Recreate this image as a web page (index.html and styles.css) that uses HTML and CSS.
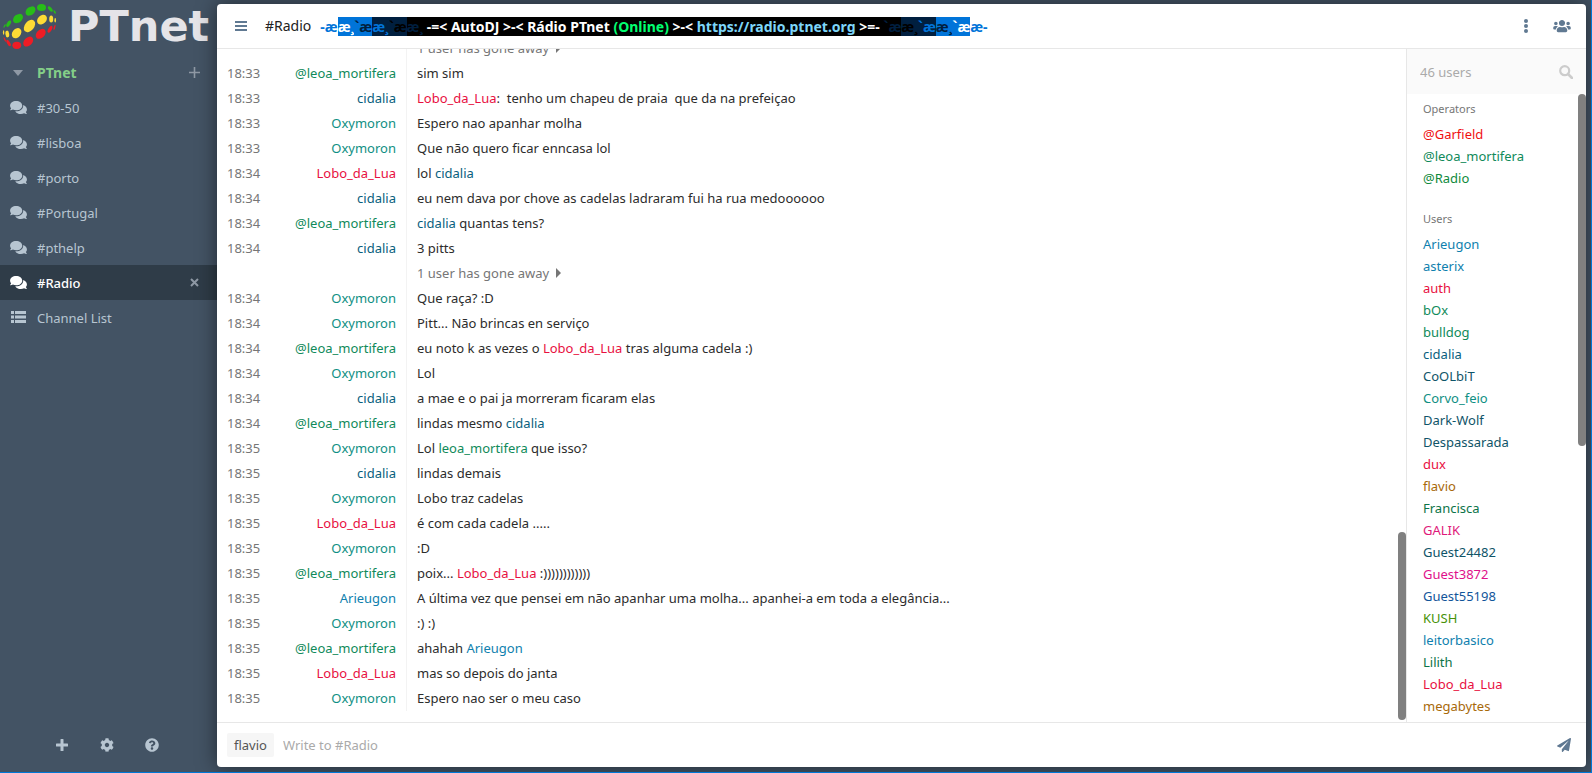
FILE: index.html
```
<!DOCTYPE html>
<html lang="pt">
<head>
    <meta charset="UTF-8">
    <meta name="viewport" content="width=device-width, initial-scale=1.0">
    <title>#Radio - PTnet</title>
    <link rel="stylesheet" href="styles.css">
</head>
<body>
    <svg class="sprite" aria-hidden="true">
        <symbol id="comments" viewBox="0 0 576 512"><path d="M416 192c0-88.4-93.1-160-208-160S0 103.6 0 192c0 34.3 14.1 65.9 38 92-13.4 30.2-35.5 54.2-35.8 54.5-2.2 2.3-2.8 5.7-1.5 8.7S4.8 352 8 352c36.6 0 66.9-12.3 88.7-25 32.2 15.7 70.3 25 111.3 25 114.9 0 208-71.6 208-160zm122 220c23.9-26 38-57.7 38-92 0-66.9-53.5-124.2-129.3-148.1.9 6.6 1.3 13.3 1.3 20.1 0 105.9-107.7 192-240 192-10.8 0-21.3-.8-31.7-1.9C207.8 439.6 281.8 480 368 480c41 0 79.1-9.2 111.3-25 21.8 12.7 52.1 25 88.7 25 3.2 0 6.1-1.9 7.3-4.8 1.3-2.9.7-6.3-1.5-8.7-.3-.3-22.4-24.2-35.8-54.5z"/></symbol>
    </svg>

    <div class="app">
        <nav class="sidebar">
            <div class="logo">
                <svg class="logo-mark" viewBox="0 0 60 52" width="60" height="52">
                    <g fill="#27bd18">
                        <ellipse cx="41.5" cy="7.5" rx="4.5" ry="3.5"/>
                        <ellipse cx="30.5" cy="11" rx="5.5" ry="4" transform="rotate(-38 30.5 11)"/>
                        <ellipse cx="18" cy="18.5" rx="5.5" ry="4" transform="rotate(-38 18 18.5)"/>
                        <ellipse cx="8.7" cy="23.7" rx="3.6" ry="1.8" transform="rotate(-60 8.7 23.7)"/>
                        <ellipse cx="4.6" cy="26" rx="2" ry=".7" transform="rotate(-60 4.6 26)"/>
                        <ellipse cx="50.3" cy="9" rx="3.2" ry="1.6" transform="rotate(50 50.3 9)"/>
                        <ellipse cx="54.7" cy="12" rx="2" ry=".8" transform="rotate(60 54.7 12)"/>
                    </g>
                    <g fill="#fddb35">
                        <ellipse cx="42" cy="19.6" rx="5.6" ry="4.2" transform="rotate(-45 42 19.6)"/>
                        <ellipse cx="29.5" cy="26" rx="7" ry="4.6" transform="rotate(-50 29.5 26)"/>
                        <ellipse cx="16.6" cy="33.2" rx="5.6" ry="4.2" transform="rotate(-50 16.6 33.2)"/>
                        <ellipse cx="7.3" cy="34" rx="1.9" ry="3.4" transform="rotate(-8 7.3 34)"/>
                        <ellipse cx="3.6" cy="32.5" rx=".7" ry="2.2"/>
                        <ellipse cx="51.2" cy="19" rx="2" ry="3.6"/>
                        <ellipse cx="55.2" cy="20.3" rx=".8" ry="2.3"/>
                    </g>
                    <g fill="#ee1c25">
                        <ellipse cx="40.7" cy="33.8" rx="5.8" ry="4" transform="rotate(-45 40.7 33.8)"/>
                        <ellipse cx="28.2" cy="41.6" rx="5.8" ry="4" transform="rotate(-45 28.2 41.6)"/>
                        <ellipse cx="16.8" cy="45.3" rx="4.4" ry="3.6"/>
                        <ellipse cx="8.6" cy="43" rx="3.6" ry="1.5" transform="rotate(60 8.6 43)"/>
                        <ellipse cx="4.8" cy="39.5" rx="2.4" ry=".7" transform="rotate(65 4.8 39.5)"/>
                        <ellipse cx="50" cy="29.3" rx="3.8" ry="1.7" transform="rotate(-60 50 29.3)"/>
                        <ellipse cx="54.5" cy="27.4" rx="2.8" ry=".8" transform="rotate(-75 54.5 27.4)"/>
                    </g>
                </svg>
                <span class="logo-text">PTnet</span>
            </div>
            <div class="item network">
                <button class="icon-btn" aria-label="Collapse"><svg width="10" height="6" viewBox="0 0 10 6"><path d="M0 0h10L5 6z"/></svg></button>
                <a href="#ptnet">PTnet</a>
                <button class="icon-btn side" aria-label="Join channel"><svg width="11" height="11" viewBox="0 0 11 11"><path d="M5.500 0v11M0 5.500h11" stroke="currentColor" stroke-width="1.600"/></svg></button>
            </div>
            <div class="item"><svg class="chan-icon"><use href="#comments"/></svg><a href="#30-50">#30-50</a></div>
            <div class="item"><svg class="chan-icon"><use href="#comments"/></svg><a href="#lisboa">#lisboa</a></div>
            <div class="item"><svg class="chan-icon"><use href="#comments"/></svg><a href="#porto">#porto</a></div>
            <div class="item"><svg class="chan-icon"><use href="#comments"/></svg><a href="#portugal">#Portugal</a></div>
            <div class="item"><svg class="chan-icon"><use href="#comments"/></svg><a href="#pthelp">#pthelp</a></div>
            <div class="item active">
                <svg class="chan-icon"><use href="#comments"/></svg><a href="#radio">#Radio</a>
                <button class="icon-btn side" aria-label="Leave"><svg width="9" height="9" viewBox="0 0 9 9"><path d="M1 1l7 7M8 1L1 8" stroke="currentColor" stroke-width="2"/></svg></button>
            </div>
            <div class="item">
                <svg class="chan-icon" viewBox="0 0 17 15"><path d="M1 1h3v3H1zM5 1h11v3H5zM1 5.500h3v3H1zM5 5.500h11v3H5zM1 10h3v3H1zM5 10h11v3H5z"/></svg><a href="#list">Channel List</a>
            </div>
            <footer class="sidebar-footer">
                <button aria-label="Connect"><svg width="14" height="14" viewBox="0 0 14 14"><path d="M6 1h2q.5 0 .5.5v4h4q.5 0 .5.5v2q0 .5-.5.5h-4v4q0 .5-.5.5H6q-.5 0-.5-.5v-4h-4Q1 8.500 1 8V6q0-.5.5-.5h4v-4Q5.500 1 6 1z"/></svg></button>
                <button aria-label="Settings"><svg width="14" height="14" viewBox="0 0 512 512"><path d="M487.4 315.7l-42.6-24.6c4.3-23.2 4.3-47 0-70.2l42.6-24.6c4.9-2.8 7.1-8.6 5.5-14-11.1-35.6-30-67.8-54.7-94.6-3.8-4.1-10-5.1-14.8-2.3L380.8 110c-17.9-15.4-38.5-27.3-60.8-35.1V25.8c0-5.6-3.900-10.500-9.400-11.700-36.700-8.200-74.300-7.800-109.200 0-5.500 1.200-9.400 6.100-9.400 11.700V75c-22.200 7.900-42.800 19.800-60.800 35.100L88.700 85.500c-4.900-2.800-11-1.900-14.800 2.300-24.700 26.700-43.600 58.900-54.700 94.600-1.700 5.400.6 11.200 5.500 14L67.300 221c-4.300 23.200-4.300 47 0 70.200l-42.600 24.600c-4.900 2.800-7.100 8.600-5.500 14 11.100 35.600 30 67.800 54.700 94.600 3.800 4.100 10 5.100 14.800 2.300l42.600-24.600c17.900 15.400 38.500 27.300 60.800 35.100v49.200c0 5.600 3.900 10.500 9.400 11.700 36.700 8.200 74.300 7.800 109.200 0 5.500-1.200 9.400-6.100 9.400-11.700v-49.200c22.200-7.900 42.800-19.800 60.800-35.100l42.600 24.600c4.900 2.800 11 1.900 14.800-2.300 24.700-26.700 43.600-58.900 54.700-94.600 1.500-5.500-.7-11.300-5.600-14.100zM256 336c-44.100 0-80-35.900-80-80s35.900-80 80-80 80 35.900 80 80-35.900 80-80 80z"/></svg></button>
                <button aria-label="Help"><svg width="14" height="14" viewBox="0 0 512 512"><path d="M504 256c0 136.997-111.043 248-248 248S8 392.997 8 256C8 119.083 119.043 8 256 8s248 111.083 248 248zM262.655 90c-54.497 0-89.255 22.957-116.549 63.758-3.536 5.286-2.353 12.415 2.715 16.258l34.699 26.310c5.205 3.947 12.621 3.008 16.665-2.122 17.864-22.658 30.113-35.797 57.303-35.797 20.429 0 45.698 13.148 45.698 32.958 0 14.976-12.363 22.667-32.534 33.976C247.128 238.528 216 254.941 216 296v4c0 6.627 5.373 12 12 12h56c6.627 0 12-5.373 12-12v-1.333c0-28.462 83.186-29.647 83.186-106.667 0-58.002-60.165-102-116.531-102zM256 338c-25.365 0-46 20.635-46 46 0 25.364 20.635 46 46 46s46-20.636 46-46c0-25.365-20.635-46-46-46z"/></svg></button>
            </footer>
        </nav>

        <main class="window">
            <header class="header">
                <button class="menu-btn" aria-label="Toggle channel list"><svg width="12" height="12" viewBox="0 0 12 12"><path d="M0 1h12v2H0zM0 5h12v2H0zM0 9h12v2H0z"/></svg></button>
                <h1>#Radio</h1>
                <div class="topic"><span class="fg-blue">-æ</span><span class="bg-blue fg-white">æ¸</span><span class="bg-blue fg-navy">`æ</span><span class="bg-navy fg-blue">æ¸</span><span class="bg-navy fg-black">`æ</span><span class="bg-black fg-navy">æ¸</span><span class="bg-black fg-white"> -=&lt; AutoDJ &gt;-&lt; Rádio PTnet <span class="fg-green">(Online)</span> &gt;-&lt; <a href="https://radio.ptnet.org">https://radio.ptnet.org</a> &gt;=- </span><span class="bg-black fg-navy">`æ</span><span class="bg-navy fg-black">æ¸</span><span class="bg-navy fg-blue">`æ</span><span class="bg-blue fg-navy">æ¸</span><span class="bg-blue fg-white">`æ</span><span class="fg-blue">æ-</span></div>
                <button class="more-btn" aria-label="Menu"><svg width="6" height="14" viewBox="0 0 6 14"><circle cx="3" cy="2" r="2"/><circle cx="3" cy="7" r="2"/><circle cx="3" cy="12" r="2"/></svg></button>
                <button class="users-btn" aria-label="Toggle user list"><svg width="18" height="14" viewBox="0 0 640 512"><path d="M96 224c35.300 0 64-28.700 64-64s-28.700-64-64-64-64 28.700-64 64 28.700 64 64 64zm448 0c35.300 0 64-28.700 64-64s-28.700-64-64-64-64 28.700-64 64 28.700 64 64 64zm32 32h-64c-17.600 0-33.500 7.100-45.100 18.600 40.300 22.100 68.900 62 75.100 109.400h66c17.700 0 32-14.300 32-32v-32c0-35.300-28.700-64-64-64zm-256 0c61.900 0 112-50.100 112-112S381.900 32 320 32 208 82.100 208 144s50.100 112 112 112zm76.800 32h-8.300c-20.800 10-43.900 16-68.500 16s-47.600-6-68.500-16h-8.300C179.600 288 128 339.600 128 403.200V432c0 26.500 21.500 48 48 48h288c26.500 0 48-21.500 48-48v-28.800c0-63.600-51.600-115.200-115.200-115.200zm-223.700-13.400C161.500 263.100 145.600 256 128 256H64c-35.300 0-64 28.700-64 64v32c0 17.700 14.300 32 32 32h65.900c6.300-47.400 34.900-87.300 75.200-109.400z"/></svg></button>
            </header>

            <div class="content">
                <section class="chat">
                    <div class="msg status"><span class="time"></span><span class="from"></span><span class="text">1 user has gone away <i class="caret"></i></span></div>
                    <div class="msg"><span class="time">18:33</span><span class="from c-leoa">@leoa_mortifera</span><span class="text">sim sim</span></div>
                    <div class="msg"><span class="time">18:33</span><span class="from c-cid">cidalia</span><span class="text"><span class="c-lobo">Lobo_da_Lua</span>:  tenho um chapeu de praia  que da na prefeiçao</span></div>
                    <div class="msg"><span class="time">18:33</span><span class="from c-oxy">Oxymoron</span><span class="text">Espero nao apanhar molha</span></div>
                    <div class="msg"><span class="time">18:33</span><span class="from c-oxy">Oxymoron</span><span class="text">Que não quero ficar enncasa lol</span></div>
                    <div class="msg"><span class="time">18:34</span><span class="from c-lobo">Lobo_da_Lua</span><span class="text">lol <span class="c-cid">cidalia</span></span></div>
                    <div class="msg"><span class="time">18:34</span><span class="from c-cid">cidalia</span><span class="text">eu nem dava por chove as cadelas ladraram fui ha rua medoooooo</span></div>
                    <div class="msg"><span class="time">18:34</span><span class="from c-leoa">@leoa_mortifera</span><span class="text"><span class="c-cid">cidalia</span> quantas tens?</span></div>
                    <div class="msg"><span class="time">18:34</span><span class="from c-cid">cidalia</span><span class="text">3 pitts</span></div>
                    <div class="msg status"><span class="time"></span><span class="from"></span><span class="text">1 user has gone away <i class="caret"></i></span></div>
                    <div class="msg"><span class="time">18:34</span><span class="from c-oxy">Oxymoron</span><span class="text">Que raça? :D</span></div>
                    <div class="msg"><span class="time">18:34</span><span class="from c-oxy">Oxymoron</span><span class="text">Pitt... Não brincas en serviço</span></div>
                    <div class="msg"><span class="time">18:34</span><span class="from c-leoa">@leoa_mortifera</span><span class="text">eu noto k as vezes o <span class="c-lobo">Lobo_da_Lua</span> tras alguma cadela :)</span></div>
                    <div class="msg"><span class="time">18:34</span><span class="from c-oxy">Oxymoron</span><span class="text">Lol</span></div>
                    <div class="msg"><span class="time">18:34</span><span class="from c-cid">cidalia</span><span class="text">a mae e o pai ja morreram ficaram elas</span></div>
                    <div class="msg"><span class="time">18:34</span><span class="from c-leoa">@leoa_mortifera</span><span class="text">lindas mesmo <span class="c-cid">cidalia</span></span></div>
                    <div class="msg"><span class="time">18:35</span><span class="from c-oxy">Oxymoron</span><span class="text">Lol <span class="c-leoa">leoa_mortifera</span> que isso?</span></div>
                    <div class="msg"><span class="time">18:35</span><span class="from c-cid">cidalia</span><span class="text">lindas demais</span></div>
                    <div class="msg"><span class="time">18:35</span><span class="from c-oxy">Oxymoron</span><span class="text">Lobo traz cadelas</span></div>
                    <div class="msg"><span class="time">18:35</span><span class="from c-lobo">Lobo_da_Lua</span><span class="text">é com cada cadela .....</span></div>
                    <div class="msg"><span class="time">18:35</span><span class="from c-oxy">Oxymoron</span><span class="text">:D</span></div>
                    <div class="msg"><span class="time">18:35</span><span class="from c-leoa">@leoa_mortifera</span><span class="text">poix... <span class="c-lobo">Lobo_da_Lua</span> :))))))))))))</span></div>
                    <div class="msg"><span class="time">18:35</span><span class="from c-ari">Arieugon</span><span class="text">A última vez que pensei em não apanhar uma molha... apanhei-a em toda a elegância...</span></div>
                    <div class="msg"><span class="time">18:35</span><span class="from c-oxy">Oxymoron</span><span class="text">:) :)</span></div>
                    <div class="msg"><span class="time">18:35</span><span class="from c-leoa">@leoa_mortifera</span><span class="text">ahahah <span class="c-ari">Arieugon</span></span></div>
                    <div class="msg"><span class="time">18:35</span><span class="from c-lobo">Lobo_da_Lua</span><span class="text">mas so depois do janta</span></div>
                    <div class="msg"><span class="time">18:35</span><span class="from c-oxy">Oxymoron</span><span class="text">Espero nao ser o meu caso</span></div>
                    <div class="scrollbar chat-scrollbar"></div>
                </section>

                <aside class="userlist">
                    <div class="search">
                        <input type="search" placeholder="46 users" aria-label="Search among the user list">
                        <svg width="14" height="14" viewBox="0 0 14 14"><circle cx="5.700" cy="5.700" r="4.500" fill="none" stroke="#ccc" stroke-width="2.200"/><path d="M9 9l4 4" stroke="#ccc" stroke-width="2.600" stroke-linecap="round"/></svg>
                    </div>
                    <div class="names">
                        <h2>Operators</h2>
                        <ul>
                            <li class="c-garf">@Garfield</li>
                            <li class="c-leoa">@leoa_mortifera</li>
                            <li class="c-green">@Radio</li>
                        </ul>
                        <h2>Users</h2>
                        <ul>
                            <li class="c-ari">Arieugon</li>
                            <li class="c-ari">asterix</li>
                            <li class="c-lobo">auth</li>
                            <li class="c-leoa">bOx</li>
                            <li class="c-leoa">bulldog</li>
                            <li class="c-cid">cidalia</li>
                            <li class="c-teal">CoOLbiT</li>
                            <li class="c-oxy">Corvo_feio</li>
                            <li class="c-teal">Dark-Wolf</li>
                            <li class="c-teal">Despassarada</li>
                            <li class="c-lobo">dux</li>
                            <li class="c-brown">flavio</li>
                            <li class="c-forest">Francisca</li>
                            <li class="c-pink">GALIK</li>
                            <li class="c-teal">Guest24482</li>
                            <li class="c-magenta">Guest3872</li>
                            <li class="c-navy">Guest55198</li>
                            <li class="c-lime">KUSH</li>
                            <li class="c-ari">leitorbasico</li>
                            <li class="c-forest">Lilith</li>
                            <li class="c-lobo">Lobo_da_Lua</li>
                            <li class="c-brown">megabytes</li>
                        </ul>
                        <div class="scrollbar names-scrollbar"></div>
                    </div>
                </aside>
            </div>

            <form class="input-form">
                <label class="nick" for="input">flavio</label>
                <input id="input" type="text" placeholder="Write to #Radio">
                <button type="button" aria-label="Send message"><svg width="14" height="14" viewBox="0 0 512 512"><path d="M476 3.200L12.500 270.600c-18.100 10.400-15.800 35.600 2.200 43.200L121 358.400l287.300-253.200c5.500-4.900 13.300 2.600 8.600 8.300L176 407v80.500c0 23.600 28.500 32.900 42.500 15.800L282 426l124.600 52.200c14.200 6 30.400-2.900 33-18.200l72-432C515 7.800 493.300-6.800 476 3.200z"/></svg></button>
            </form>
        </main>
    </div>
</body>
</html>
```
FILE: styles.css
```
* {
    margin: 0;
    padding: 0;
    box-sizing: border-box;
}

body {
    font: 13px/20px "Noto Sans", "Open Sans", sans-serif;
    color: #2c2c2c;
}

svg {
    display: block;
    fill: currentColor;
}

button {
    border: none;
    background: none;
    color: inherit;
    cursor: pointer;
    display: flex;
    align-items: center;
    justify-content: center;
}

input {
    border: none;
    outline: none;
    background: none;
    font: inherit;
    min-width: 0;
}

input::placeholder {
    color: #aaa;
}

a {
    color: inherit;
    text-decoration: none;
}

ul {
    list-style: none;
}

.sprite {
    position: absolute;
    width: 0;
    height: 0;
}

.app {
    display: flex;
    height: 100vh;
    background: #435364;
    border-right: 1px solid #0078d7;
    border-bottom: 1px solid #0078d7;
    overflow: hidden;
}

/* Sidebar */
.sidebar {
    width: 217px;
    flex: none;
    display: flex;
    flex-direction: column;
    color: #b7c5d1;
}

.logo {
    display: flex;
    height: 55px;
    align-items: flex-start;
}

.logo-mark {
    flex: none;
}

.logo-text {
    font: bold 43px/52px "DejaVu Sans", sans-serif;
    color: #e5e4e8;
    padding-left: 8px;
}

.item {
    display: flex;
    align-items: center;
    height: 35px;
    padding: 0 16px 0 10px;
}

.item a {
    flex: 1;
}

.item.active {
    background: #2f3c48;
    color: #fff;
}

.item.active a {
    font-weight: 500;
}

.chan-icon {
    width: 17px;
    height: 15px;
    margin-right: 10px;
}

.network a {
    color: #84ce88;
    font-size: 14px;
    font-weight: bold;
}

.icon-btn {
    width: 16px;
    height: 16px;
    margin-right: 11px;
    color: #8f99a5;
}

.icon-btn.side {
    margin-right: -1px;
    width: 15px;
}

.sidebar-footer {
    display: flex;
    justify-content: center;
    margin-top: auto;
    padding: 0 4px 5px 0;
}

.sidebar-footer button {
    width: 45px;
    height: 45px;
}

/* Chat window */
.window {
    flex: 1;
    min-width: 0;
    display: flex;
    flex-direction: column;
    margin: 4px 5px 5px 0;
    background: #fff;
    border-radius: 4px;
    box-shadow: 0 0 20px rgba(0, 0, 0, 0.5);
    overflow: hidden;
}

.header {
    display: flex;
    align-items: center;
    height: 45px;
    flex: none;
    border-bottom: 1px solid #e7e7e7;
    color: #607992;
    white-space: nowrap;
}

.header h1 {
    font-size: 14px;
    font-weight: normal;
    color: #222;
    margin-right: 9px;
}

.menu-btn {
    width: 48px;
    height: 44px;
}

.topic {
    flex: 1;
    min-width: 0;
    overflow: hidden;
    padding-top: 2px;
    font-size: 14px;
    font-weight: bold;
    white-space: pre;
}

.topic a {
    color: #7ed6f9;
}

.more-btn,
.users-btn {
    width: 36px;
    height: 44px;
}

.users-btn {
    margin-right: 6px;
}

.fg-blue { color: #0074d9; }
.fg-white { color: #fff; }
.fg-navy { color: #001f3f; }
.fg-black { color: #000; }
.fg-green { color: #01ff70; }
.bg-blue { background: #0074d9; }
.bg-navy { background: #001f3f; }
.bg-black { background: #000; }

.content {
    flex: 1;
    min-height: 0;
    display: flex;
}

.chat {
    flex: 1;
    min-width: 0;
    position: relative;
    display: flex;
    flex-direction: column;
    justify-content: flex-end;
    padding-bottom: 11px;
    overflow: hidden;
}

.msg {
    display: grid;
    grid-template-columns: 55px 134px 1fr;
    flex: none;
    line-height: 25px;
}

.time {
    padding-left: 10px;
    color: #767676;
}

.from {
    padding-right: 10px;
    text-align: right;
}

.text {
    border-left: 1px solid #f3f3f3;
    padding-left: 10px;
    white-space: pre-wrap;
}

.status .text {
    color: #767676;
}

.caret {
    display: inline-block;
    margin-left: 3px;
    border-left: 5px solid #767676;
    border-top: 5px solid transparent;
    border-bottom: 5px solid transparent;
}

.scrollbar {
    position: absolute;
    right: 0;
    width: 8px;
    border-radius: 4px;
    background: #808080;
}

.chat-scrollbar {
    bottom: 2px;
    height: 28%;
}

.names-scrollbar {
    top: 0;
    height: 56%;
}

/* User list */
.userlist {
    width: 180px;
    flex: none;
    display: flex;
    flex-direction: column;
    border-left: 1px solid #e7e7e7;
}

.search {
    display: flex;
    align-items: center;
    height: 45px;
    flex: none;
    padding: 0 13px;
    background: #fafafa;
}

.search input {
    flex: 1;
}

.names {
    flex: 1;
    min-height: 0;
    position: relative;
    overflow: hidden;
    padding-left: 16px;
    line-height: 22px;
}

.names h2 {
    font-size: 11px;
    font-weight: normal;
    line-height: 29px;
    color: #767676;
}

.names ul {
    margin-bottom: 15px;
}

/* Nick colours */
.c-leoa { color: #108a5a; }
.c-cid { color: #0a5f7e; }
.c-oxy { color: #0f8f83; }
.c-lobo { color: #e8103f; }
.c-ari { color: #0f7fae; }
.c-garf { color: #f01010; }
.c-green { color: #0f8a3c; }
.c-teal { color: #0f5468; }
.c-brown { color: #a8690a; }
.c-forest { color: #0c7448; }
.c-pink { color: #e0197a; }
.c-magenta { color: #e0108a; }
.c-navy { color: #12559a; }
.c-lime { color: #469208; }

/* Message box */
.input-form {
    display: flex;
    align-items: center;
    height: 45px;
    flex: none;
    border-top: 1px solid #e7e7e7;
    padding-left: 10px;
}

.nick {
    padding: 2px 7px;
    border-radius: 2px;
    background: #f6f6f6;
    color: #555;
}

.input-form input {
    flex: 1;
    height: 44px;
    padding-left: 9px;
}

.input-form button {
    width: 44px;
    height: 44px;
    color: #607992;
}
```
